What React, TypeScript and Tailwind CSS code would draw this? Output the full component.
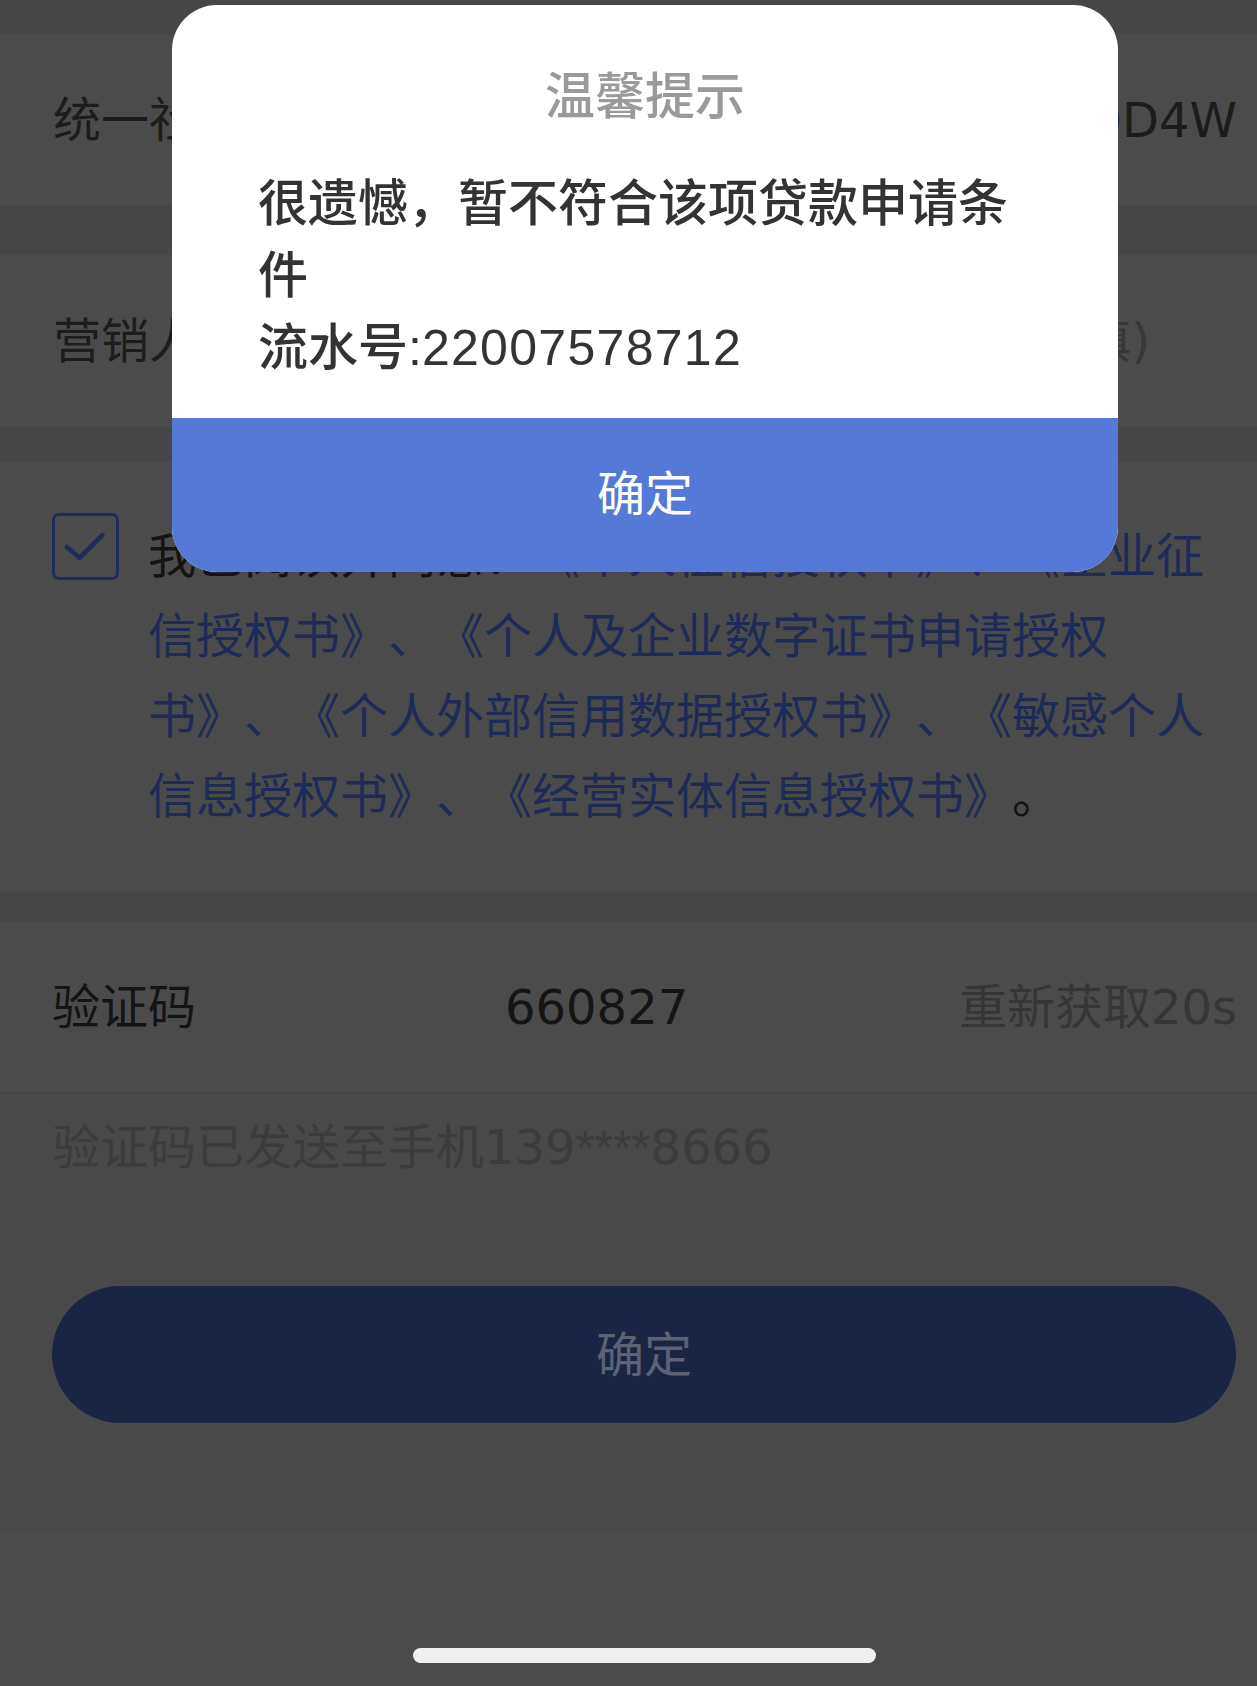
import React from 'react'

const pageFont = 'font-["DejaVu_Sans","Noto_Sans_CJK_SC",sans-serif]'
const modalFont = 'font-["Liberation_Sans","Noto_Sans_CJK_SC",sans-serif]'

function Band({ className }: { className: string }) {
  return <div className={`bg-[#464646] ${className}`} />
}

export default function App() {
  return (
    <div className={`relative h-[1686px] w-full overflow-hidden bg-[#4b4b4b] [text-spacing-trim:space-all] ${pageFont}`}>
      <Band className="h-[34px] border-b border-[#444]" />

      <div className="flex h-[171px] items-center justify-between pl-[53px] pr-[20px] text-[48px] text-[#1c1c1c]">
        <span>统一社会信用代码</span>
        <span>91310115MA1K40D4W</span>
      </div>

      <Band className="h-[50px]" />

      <div className="flex h-[172px] items-center justify-between pl-[53px] pr-[107px] text-[48px]">
        <span className="text-[#1c1c1c]">营销人员编号</span>
        <span className="text-[#383838]">请输入(选填)</span>
      </div>

      <Band className="h-[35px]" />

      <div className="flex h-[430px] items-start gap-[29px] pl-[52px] pr-[20px] pt-[51px]">
        <div className="flex h-[67px] w-[67px] shrink-0 items-center justify-center rounded-[7px] border-[3px] border-[#1f2d5b]">
          <svg viewBox="0 0 67 67" className="h-[67px] w-[67px]">
            <path d="M13 34 L27 46 L52 21" fill="none" stroke="#1f2d5b" strokeWidth="5" strokeLinecap="round" strokeLinejoin="round" />
          </svg>
        </div>
        <p className="mt-[3px] text-[48px] leading-[80px] text-[#1e2b57]">
          <span className="text-[#141414]">我已阅读并同意：</span>
          《个人征信授权书》、《企业征信授权书》、《个人及企业数字证书申请授权书》、《个人外部信用数据授权书》、《敏感个人信息授权书》、《经营实体信息授权书》
          <span className="text-[#141414]">。</span>
        </p>
      </div>

      <Band className="h-[30px]" />

      <div className="flex h-[171px] items-center border-b border-[#444] pl-[52px] pr-[20px] text-[48px]">
        <span className="w-[453px] text-[#141414]">验证码</span>
        <span className="flex-1 text-[#141414]">660827</span>
        <span className="text-[#363636]">重新获取20s</span>
      </div>

      <div className="bg-[#494949] pb-[108px] pl-[52px] pr-[21px] pt-[24px]">
        <p className="text-[48px] leading-[60px] text-[#3c3c3c]">
          验证码已发送至手机139<span className='font-["Liberation_Sans",sans-serif]'>****</span>8666
        </p>
        <button
          type="button"
          className="mt-[108px] flex h-[137px] w-full items-center justify-center rounded-full bg-[#1a2543] text-[48px] text-[#5c6272]"
        >
          确定
        </button>
      </div>

      <div className={`absolute left-[172px] top-[5px] w-[946px] overflow-hidden rounded-[45px] bg-white ${modalFont}`}>
        <div className="px-[86px] pb-[34px] pt-[62px]">
          <h2 className="text-center text-[50px] font-medium leading-[60px] text-[#9a9a9a]">温馨提示</h2>
          <div className="mt-[41px] text-[50px] font-medium leading-[72px] text-[#333]">
            <p>很遗憾，暂不符合该项贷款申请条件</p>
            <p>
              流水号:<span className="tracking-[1.3px]">22007578712</span>
            </p>
          </div>
        </div>
        <button
          type="button"
          className="flex h-[154px] w-full items-center justify-center bg-[#5479d6] text-[48px] text-white"
        >
          确定
        </button>
      </div>

      <div className="absolute bottom-[23px] left-[413px] h-[15px] w-[463px] rounded-full bg-[#efefef]" />
    </div>
  )
}
